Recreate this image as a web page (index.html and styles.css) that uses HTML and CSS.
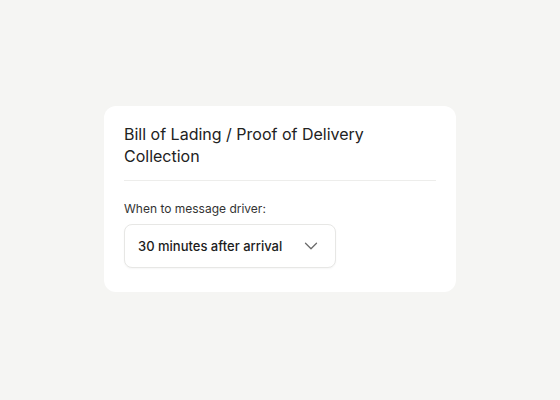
FILE: index.html
```html
<!DOCTYPE html>
<html lang="en">
<head>
<meta charset="utf-8">
<title>Bill of Lading</title>
<link rel="stylesheet" href="styles.css">
</head>
<body>
<main class="stage">
  <section class="card">
    <h2 class="card-title">Bill of Lading / Proof of Delivery Collection</h2>
    <div class="field">
      <label class="field-label">When to message driver:</label>
      <button class="select" type="button">
        <span class="select-value">30 minutes after arrival</span>
        <svg class="chevron" width="14" height="8" viewBox="0 0 14 8" aria-hidden="true">
          <path d="M1.5 1.2l5.5 5.5 5.5-5.5" fill="none" stroke="#6b6b6b" stroke-width="1.3" stroke-linecap="round" stroke-linejoin="round"/>
        </svg>
      </button>
    </div>
  </section>
</main>
</body>
</html>
```

FILE: styles.css
```css
* { box-sizing: border-box; }
html, body { margin: 0; padding: 0; }
body {
  background: #f5f5f3;
  font-family: Inter, "Noto Sans", sans-serif;
  width: 560px;
  height: 400px;
}
.stage {
  width: 560px;
  height: 400px;
  display: flex;
  align-items: center;
  justify-content: center;
}
.card {
  width: 352px;
  background: #ffffff;
  border-radius: 12px;
  padding: 17px 20px 24px 20px;
  margin-top: -2px;
}
.card-title {
  margin: 0;
  font-size: 16px;
  line-height: 22px;
  font-weight: 400;
  color: #222222;
  padding-bottom: 13px;
  border-bottom: 1px solid #ededeb;
  padding-right: 60px;
}
.field {
  display: flex;
  flex-direction: column;
  align-items: flex-start;
  padding-top: 19px;
}
.field-label {
  font-size: 12px;
  line-height: 18px;
  color: #333333;
  margin-bottom: 6px;
}
.select {
  width: 212px;
  height: 44px;
  display: flex;
  align-items: center;
  justify-content: space-between;
  padding: 0 17px 0 13px;
  background: #ffffff;
  border: 1px solid #e7e7e5;
  border-radius: 8px;
  box-shadow: 0 1px 2px rgba(0, 0, 0, 0.04);
  font-family: inherit;
  cursor: pointer;
}
.select-value {
  font-size: 13px;
  font-weight: 500;
  color: #1c1c1c;
}
.chevron { display: block; }
```
